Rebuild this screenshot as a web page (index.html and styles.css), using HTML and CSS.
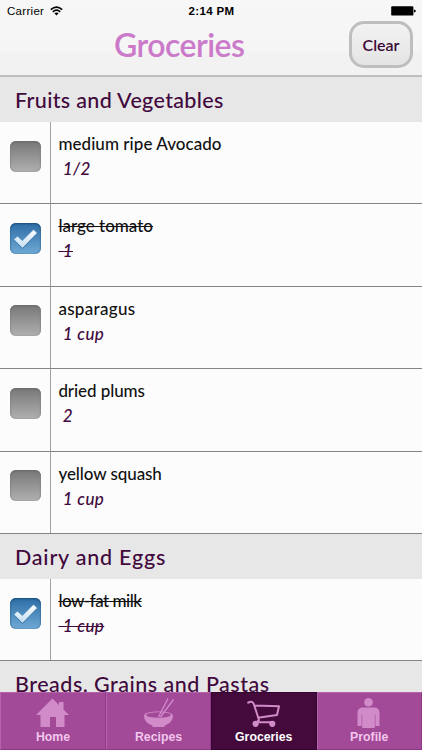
FILE: index.html
```html
<!DOCTYPE html>
<html lang="en">
<head>
<meta charset="utf-8">
<title>Groceries</title>
<link rel="stylesheet" href="styles.css">
</head>
<body>
<svg width="0" height="0" class="defs">
  <defs>
    <linearGradient id="tick" x1="0" y1="0" x2="0" y2="1"><stop offset="0" stop-color="#fff"/><stop offset="1" stop-color="#c3def2"/></linearGradient>
    <symbol id="check" viewBox="0 0 31 31"><path d="M4.5 16.5 L7.5 13.8 L12.3 18.3 L23.5 7 L26.7 10 L12.5 25 Z" fill="#174d7c" opacity=".45" transform="translate(0 1)"/><path d="M4.5 16.5 L7.5 13.8 L12.3 18.3 L23.5 7 L26.7 10 L12.5 24.4 Z" fill="url(#tick)" stroke="#dcecf8" stroke-width=".6" stroke-linejoin="round"/></symbol>
  </defs>
</svg>
<div class="screen">
  <header class="top">
    <div class="status">
      <div class="carrier"><span>Carrier</span>
        <svg width="13" height="10" viewBox="0 0 13 10" fill="none" stroke="#000" stroke-width="1.6"><path d="M.8 3.6Q6.5-1.5 12.2 3.6M2.8 5.9Q6.5 2.5 10.2 5.9"/><path d="M4.4 7.3Q6.5 5.6 8.6 7.3L6.5 9.5Z" fill="#000" stroke="none"/></svg>
      </div>
      <div class="time">2:14 PM</div>
      <svg class="battery" width="25" height="10" viewBox="0 0 25 10"><rect x=".2" y=".2" width="22.2" height="9.4" rx="1.2"/><path d="M23 3.4Q24.8 3.6 24.8 5T23 6.4Z"/></svg>
    </div>
    <div class="titlebar">
      <h1>Groceries</h1>
      <button class="clear">Clear</button>
    </div>
  </header>
  <main class="list">
    <h2><span class="w-fruits">Fruits and Vegetables</span></h2>
    <div class="row"><div class="cell"><i class="box"></i></div><div class="item"><p class="w-avocado">medium ripe Avocado</p><em>&nbsp;1/2</em></div></div>
    <div class="row done"><div class="cell"><i class="box"><svg width="31" height="31"><use href="#check"/></svg></i></div><div class="item"><p class="w-tomato">large tomato</p><em>&nbsp;1</em></div></div>
    <div class="row"><div class="cell"><i class="box"></i></div><div class="item"><p class="w-asparagus">asparagus</p><em>&nbsp;1 cup</em></div></div>
    <div class="row"><div class="cell"><i class="box"></i></div><div class="item"><p class="w-plums">dried plums</p><em>&nbsp;2</em></div></div>
    <div class="row"><div class="cell"><i class="box"></i></div><div class="item"><p class="w-squash">yellow squash</p><em>&nbsp;1 cup</em></div></div>
    <h2><span class="w-dairy">Dairy and Eggs</span></h2>
    <div class="row done"><div class="cell"><i class="box"><svg width="31" height="31"><use href="#check"/></svg></i></div><div class="item"><p class="w-milk">low-fat milk</p><em>&nbsp;1 cup</em></div></div>
    <h2><span class="w-breads">Breads, Grains and Pastas</span></h2>
  </main>
  <nav class="tabs">
    <a class="tab"><svg width="36" height="30" viewBox="0 0 36 30" fill="currentColor"><path d="M17.5 .5L1 17H5.5V29H15V19H21V29H29.5V17H34L28.5 11.5V4H24V7Z"/></svg><span>Home</span></a>
    <a class="tab"><svg width="36" height="30" viewBox="0 0 36 30"><path d="M3 17.5C3 12 32 12 32 17.5C32 23.5 27 26.5 23.5 27.5V29H11.5V27.5C8 26.5 3 23.5 3 17.5Z" fill="currentColor"/><ellipse cx="17.5" cy="17" rx="12.4" ry="2.7" fill="#a24997"/><path d="M17.5 19L27 .5M19.5 19L32.5 1.5" stroke="currentColor" stroke-width="1.3"/></svg><span>Recipes</span></a>
    <a class="tab active"><svg width="36" height="30" viewBox="0 0 36 30" fill="none" stroke="currentColor" stroke-width="2" stroke-linejoin="round" stroke-linecap="round"><path d="M2.2 4.7Q6 2.2 7.8 6L13 22L9.6 25M8.6 7.5L33 8.2L31 17L12 19.7M11 24.3H26"/><circle cx="9.6" cy="25.8" r="2.1" fill="currentColor"/><circle cx="26.3" cy="25.8" r="2.1" fill="currentColor"/></svg><span>Groceries</span></a>
    <a class="tab"><svg width="36" height="30" viewBox="0 0 36 30" fill="currentColor"><circle cx="17.5" cy="4.3" r="4.3"/><path d="M12 9.5H23Q28.5 9.5 28.5 15V28H24.4V16.5H23.8V30H11.2V16.5H10.6V28H6.5V15Q6.5 9.5 12 9.5Z"/></svg><span>Profile</span></a>
  </nav>
</div>
</body>
</html>
```
FILE: styles.css
```css
* { box-sizing: border-box; }
body { margin: 0; font-family: Lato, "Liberation Sans", sans-serif; }
h1, h2, p { margin: 0; font-weight: 500; }
.defs { display: block; }
.screen { width: 422px; height: 750px; display: flex; flex-direction: column; overflow: hidden; background: #fcfcfc; }
.top { height: 77px; flex: none; background: linear-gradient(#f7f7f7 0, #f5f5f5 52px, #f2f2f2 52px); border-bottom: 2px solid #bebebe; }
.status { height: 22px; padding: 0 6px 0 7px; display: grid; grid-template-columns: 1fr auto 1fr; align-items: center; font: 11.5px/22px "Liberation Sans", sans-serif; color: #000; }
.carrier { display: flex; align-items: center; gap: 6px; letter-spacing: .3px; }
.time { font-weight: 700; letter-spacing: .35px; }
.battery { justify-self: end; }
.titlebar { display: grid; grid-template-columns: 1fr 64px; margin-top: -1px; padding: 0 9px 0 114px; align-items: start; }
h1 { font-size: 32px; line-height: 47px; color: #cb7aca; font-weight: 600; white-space: nowrap; letter-spacing: -.55px; }
.clear { width: 64px; height: 47px; padding: 0; border: 3px solid #bebebe; border-radius: 15px; background: linear-gradient(#f2f2f2, #e4e4e4); font: 600 16px/36px Lato, sans-serif; color: #3b0936; }
.list { flex: 1; min-height: 0; overflow: hidden; }
h2 { height: 45px; padding-left: 15px; background: #e7e7e7; color: #41093d; font-size: 21.5px; line-height: 46px; white-space: nowrap; }
.w-fruits { letter-spacing: .33px; }
.w-dairy { letter-spacing: .78px; }
.w-breads { letter-spacing: .5px; }
.row { height: 82.4px; display: grid; grid-template-columns: 51px 1fr; border-bottom: 1px solid #858585; background: #fcfcfc; }
.cell { border-right: 1px solid #a2a2a2; padding: 18.6px 0 0 10px; }
.box { display: block; width: 31px; height: 31px; border-radius: 6px; background: linear-gradient(#777, #b0b0b0); box-shadow: inset 0 1px 2px #666, inset 0 0 2px #999; }
.box svg { display: block; }
.done .box { background: linear-gradient(#2d6da6, #6fa9d5); box-shadow: inset 0 1px 2px #174c7c, inset 0 0 2px #4a80ab; }
.item { padding: 10px 0 0 7.4px; }
.item p { width: max-content; font-size: 17px; line-height: 23px; color: #111; }
.item em { display: block; width: max-content; margin-top: 2px; font-size: 17px; line-height: 23px; font-weight: 500; color: #41093d; letter-spacing: .4px; }
.item .w-avocado { letter-spacing: .05px; }
.item .w-asparagus { letter-spacing: .3px; }
.item .w-plums { letter-spacing: -.08px; }
.item .w-squash { letter-spacing: -.08px; }
.item .w-milk { letter-spacing: -.5px; }
.done p, .done em { text-decoration: line-through 1px; text-decoration-skip-ink: none; }
.tabs { height: 58px; flex: none; display: grid; grid-template-columns: 106px 105px 105.5px 1fr; }
.tab { display: flex; flex-direction: column; align-items: center; padding-top: 5px; background: #a24997; color: #d28bc9; border: 1px solid #b562aa; border-right-color: #913986; border-bottom-color: #8c3881; font: 700 12.3px/18px "Liberation Sans", sans-serif; }
.tab svg { display: block; flex: none; }
.tab span { color: #f2c6ed; }
.active { background: #440a3c; border-color: #350430; }
.active span { color: #fff; }
```
